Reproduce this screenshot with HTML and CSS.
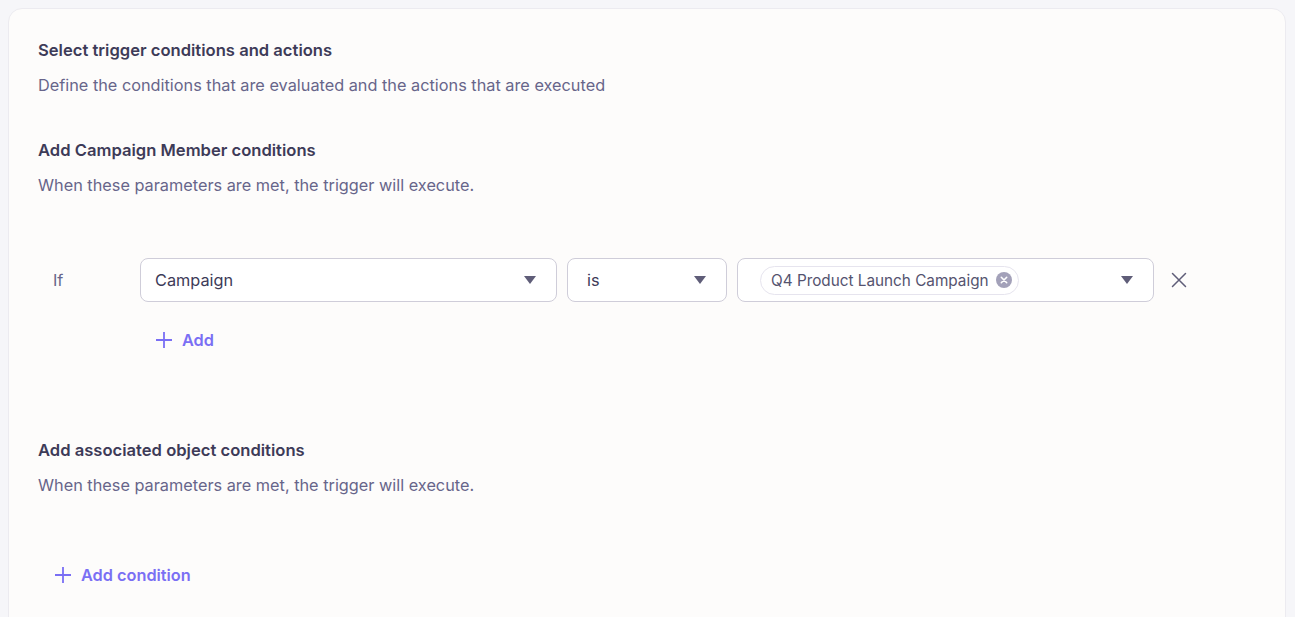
FILE: index.html
```html
<!DOCTYPE html>
<html lang="en">
<head>
    <meta charset="UTF-8">
    <title>Trigger conditions</title>
    <link rel="stylesheet" href="styles.css">
</head>
<body>
    <div class="card">
        <section class="block">
            <h2>Select trigger conditions and actions</h2>
            <p>Define the conditions that are evaluated and the actions that are executed</p>
        </section>

        <section class="block">
            <h2>Add Campaign Member conditions</h2>
            <p>When these parameters are met, the trigger will execute.</p>
        </section>

        <div class="rule">
            <span class="rule-label">If</span>
            <div class="select wide">
                <span>Campaign</span>
                <span class="caret"></span>
            </div>
            <div class="select narrow">
                <span>is</span>
                <span class="caret"></span>
            </div>
            <div class="select wide">
                <span class="chip">
                    Q4 Product Launch Campaign
                    <svg class="chip-x" width="16" height="16" viewBox="0 0 16 16">
                        <circle cx="8" cy="8" r="8" fill="#a3a1b9"/>
                        <path d="M5.3 5.3 10.7 10.7M10.7 5.3 5.3 10.7" stroke="#fff" stroke-width="1.6" stroke-linecap="round"/>
                    </svg>
                </span>
                <span class="caret"></span>
            </div>
            <svg class="remove" width="16" height="16" viewBox="0 0 16 16">
                <path d="M1.5 1.5 14.5 14.5M14.5 1.5 1.5 14.5" stroke="#5f5d78" stroke-width="1.5" stroke-linecap="round"/>
            </svg>
        </div>

        <a class="add-link add-rule" href="#">
            <svg width="18" height="18" viewBox="0 0 18 18">
                <path d="M9 1v16M1 9h16" stroke="currentColor" stroke-width="1.8"/>
            </svg>
            Add
        </a>

        <section class="block assoc">
            <h2>Add associated object conditions</h2>
            <p>When these parameters are met, the trigger will execute.</p>
        </section>

        <a class="add-link add-condition" href="#">
            <svg width="18" height="18" viewBox="0 0 18 18">
                <path d="M9 1v16M1 9h16" stroke="currentColor" stroke-width="1.8"/>
            </svg>
            Add condition
        </a>
    </div>
</body>
</html>
```

FILE: styles.css
```css
* {
    margin: 0;
    padding: 0;
    box-sizing: border-box;
}

html,
body {
    height: 617px;
    overflow: hidden;
}

body {
    background-color: #f6f6f9;
    font-family: Inter, "Noto Sans", sans-serif;
    padding: 8px 9px 0 8px;
}

.card {
    background-color: #fdfcfb;
    border: 1px solid #ecebf0;
    border-radius: 14px;
    padding: 29px 29px 60px;
}

.block h2 {
    font-size: 16.6px;
    font-weight: 600;
    color: #3d3b58;
    line-height: 24px;
}

.block p {
    font-size: 16.3px;
    color: #67658a;
    line-height: 24px;
    margin-top: 11px;
}

.block + .block {
    margin-top: 41px;
}

.rule {
    display: flex;
    align-items: center;
    margin-top: 61px;
    padding-left: 15px;
}

.rule-label {
    width: 87px;
    font-size: 16.3px;
    color: #67658a;
}

.select {
    height: 44px;
    border: 1px solid #cfcdd9;
    border-radius: 8px;
    background-color: #fff;
    display: flex;
    align-items: center;
    justify-content: space-between;
    padding: 0 20px 0 14px;
    font-size: 16.3px;
    color: #3d3b58;
    margin-right: 10px;
}

.select.wide {
    width: 417px;
}

.select.narrow {
    width: 160px;
    padding-left: 19px;
}

.select .caret {
    width: 0;
    height: 0;
    border-left: 6.5px solid transparent;
    border-right: 6.5px solid transparent;
    border-top: 8px solid #5f5d78;
}

.select .chip {
    display: inline-flex;
    align-items: center;
    gap: 7px;
    height: 29px;
    padding: 0 6px 0 10px;
    margin-left: 8px;
    border: 1px solid #e6e4ee;
    border-radius: 15px;
    font-size: 15.3px;
    color: #55536f;
}

.remove {
    margin-left: 7px;
}

.add-link {
    display: inline-flex;
    align-items: center;
    gap: 9px;
    color: #7a6ff4;
    font-size: 16.3px;
    font-weight: 600;
    text-decoration: none;
    line-height: 24px;
}

.add-rule {
    margin: 26px 0 0 117px;
}

.block.assoc {
    margin-top: 85px;
}

.add-condition {
    display: flex;
    width: fit-content;
    margin: 66px 0 0 16px;
}
```
